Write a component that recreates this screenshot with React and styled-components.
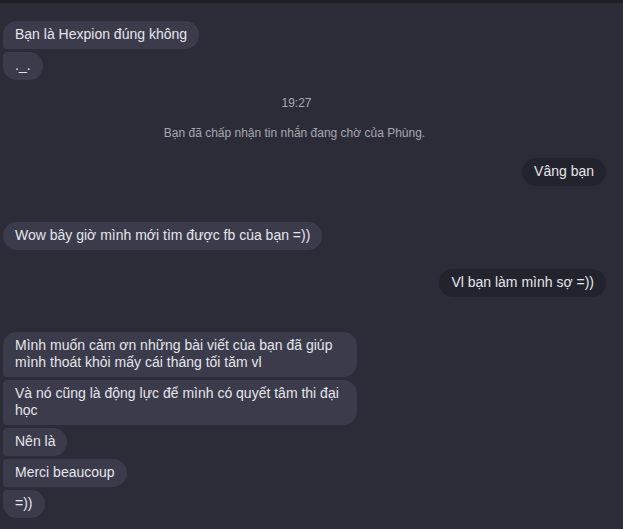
import React from 'react';
import styled, { createGlobalStyle } from 'styled-components';

const GlobalStyle = createGlobalStyle`
  html, body {
    margin: 0;
    padding: 0;
    background: #2c2c38;
  }
  body {
    font-family: 'Liberation Sans', Arial, sans-serif;
  }
`;

// space = gap above the entry
const THREAD = [
  { type: 'group', side: 'in', space: 0, items: ['Bạn là Hexpion đúng không', '._.'] },
  { type: 'time', space: 16, text: '19:27' },
  { type: 'notice', space: 16, text: 'Bạn đã chấp nhận tin nhắn đang chờ của Phùng.' },
  { type: 'group', side: 'out', space: 18, items: ['Vâng bạn'] },
  { type: 'group', side: 'in', space: 36, items: ['Wow bây giờ mình mới tìm được fb của bạn =))'] },
  { type: 'group', side: 'out', space: 19, items: ['Vl bạn làm mình sợ =))'] },
  {
    type: 'group',
    side: 'in',
    space: 35,
    items: [
      'Mình muốn cảm ơn những bài viết của bạn đã giúp mình thoát khỏi mấy cái tháng tối tăm vl',
      'Và nó cũng là động lực để mình có quyết tâm thi đại học',
      'Nên là',
      'Merci beaucoup',
      '=))',
    ],
  },
];

function cornerRadius(side, pos) {
  const big = '14px';
  const small = '4px';
  const top = pos === 'first' || pos === 'single' ? big : small;
  const bottom = pos === 'last' || pos === 'single' ? big : small;
  if (side === 'in') return `${top} ${big} ${big} ${bottom}`;
  return `${big} ${top} ${bottom} ${big}`;
}

function App() {
  return (
    <Screen>
      <GlobalStyle />
      <TopStrip />
      <Thread>
        {THREAD.map((entry, i) => {
          if (entry.type === 'time') {
            return <TimeStamp key={i} $space={entry.space}>{entry.text}</TimeStamp>;
          }
          if (entry.type === 'notice') {
            return <Notice key={i} $space={entry.space}>{entry.text}</Notice>;
          }
          const n = entry.items.length;
          return (
            <Group key={i} $side={entry.side} $space={entry.space}>
              {entry.items.map((msg, j) => {
                let pos = 'middle';
                if (n === 1) pos = 'single';
                else if (j === 0) pos = 'first';
                else if (j === n - 1) pos = 'last';
                return (
                  <Bubble key={j} $side={entry.side} $radius={cornerRadius(entry.side, pos)}>
                    {msg}
                  </Bubble>
                );
              })}
            </Group>
          );
        })}
      </Thread>
    </Screen>
  );
}

export default App;

const Screen = styled.div`
  width: 623px;
  height: 529px;
  overflow: hidden;
  background: #2c2c38;
  display: flex;
  flex-direction: column;
`;

const TopStrip = styled.div`
  height: 3px;
  background: #1f1f28;
  flex-shrink: 0;
`;

const Thread = styled.div`
  display: flex;
  flex-direction: column;
  padding: 18px 17px 0 3px;
`;

const Group = styled.div`
  display: flex;
  flex-direction: column;
  align-items: ${p => (p.$side === 'in' ? 'flex-start' : 'flex-end')};
  gap: 3px;
  margin-top: ${p => p.$space}px;
`;

const Bubble = styled.div`
  max-width: 330px;
  padding: 5px 12px 6px;
  font-size: 14px;
  line-height: 17px;
  color: #e4e6eb;
  border-radius: ${p => p.$radius};
  background: ${p => (p.$side === 'in' ? '#3c3b4b' : '#23232d')};
`;

const TimeStamp = styled.div`
  text-align: center;
  font-size: 12px;
  line-height: 14px;
  color: #a7a7b0;
  padding-right: 16px;
  margin-top: ${p => p.$space}px;
`;

const Notice = styled.div`
  text-align: center;
  font-size: 12px;
  line-height: 14px;
  color: #a7a7b0;
  padding-right: 20px;
  margin-top: ${p => p.$space}px;
`;
